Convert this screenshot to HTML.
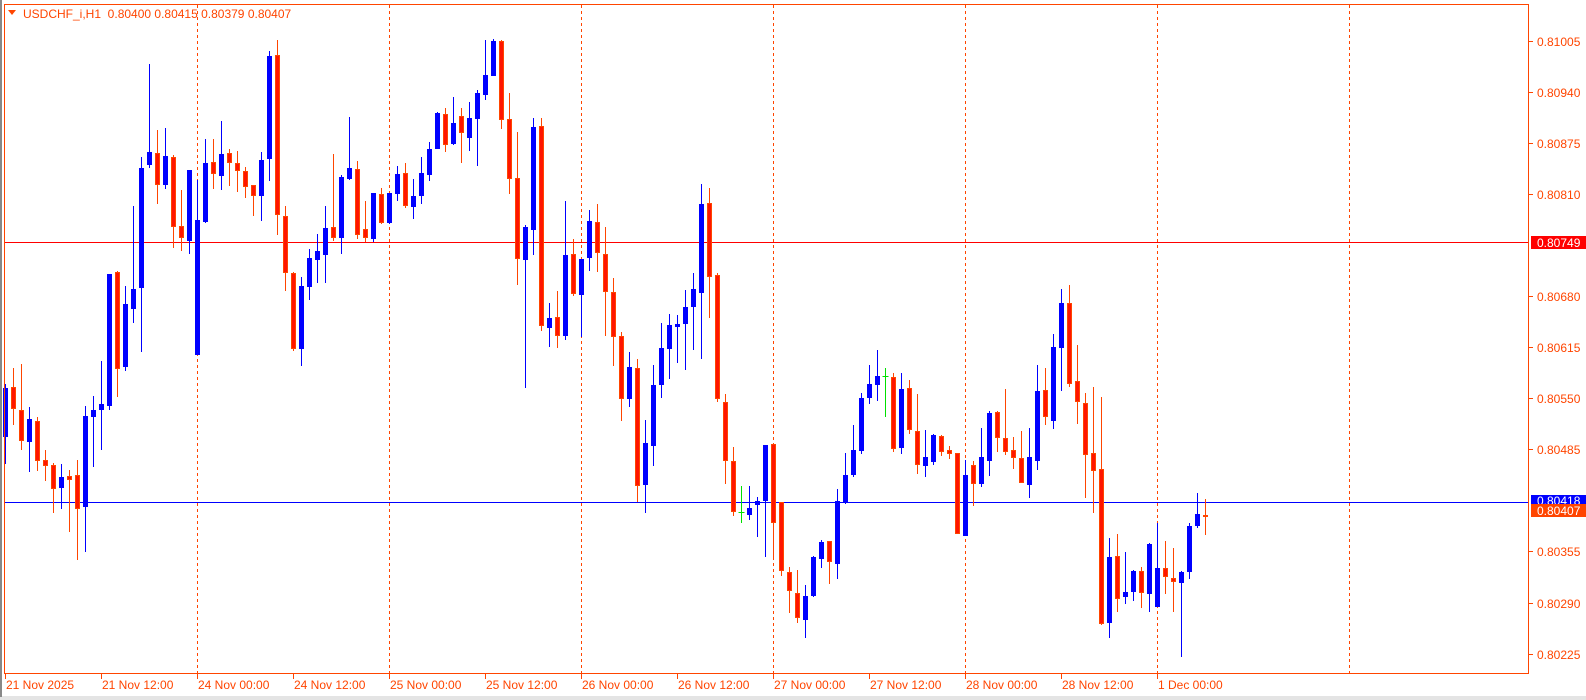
<!DOCTYPE html>
<html><head><meta charset="utf-8"><style>
html,body{margin:0;padding:0;background:#fff;width:1586px;height:700px;overflow:hidden}
svg{display:block}
text{font-family:"Liberation Sans",sans-serif;font-size:12px;fill:#ff4500}
</style></head><body>
<svg id="s" width="1586" height="700" xmlns="http://www.w3.org/2000/svg">
<rect x="0" y="0" width="1586" height="700" fill="#fff"/>
<rect x="0" y="696" width="1586" height="4" fill="#e4e4e4"/>
<rect x="0" y="0" width="2" height="697" fill="#888"/>
<g id="grid"></g>
<line x1="4.5" y1="242.5" x2="1529" y2="242.5" stroke="#ff0000" stroke-width="1"/>
<line x1="4.5" y1="502.5" x2="1529" y2="502.5" stroke="#0000ff" stroke-width="1"/>
<g id="c"></g>
<rect x="4.5" y="4.5" width="1524" height="669" fill="none" stroke="#ff4500" stroke-width="1"/>
<polygon points="8,10 16,10 12,15" fill="#ff4500"/>
<text x="23" y="18" style="font-size:12px;white-space:pre" xml:space="preserve">USDCHF_i,H1  0.80400 0.80415 0.80379 0.80407</text>
<g id="ax"></g>
<rect x="1531" y="236" width="55" height="13" fill="#ff0000"/>
<text x="1537" y="247" style="fill:#fff">0.80749</text>
<rect x="1531" y="495" width="55" height="11" fill="#0000ff"/>
<text x="1537" y="505" style="fill:#fff">0.80418</text>
<rect x="1531" y="504" width="55" height="13" fill="#ff4500"/>
<text x="1537" y="515" style="fill:#fff">0.80407</text>
</svg>
<script>
var NS="http://www.w3.org/2000/svg";
function el(p,t,a,txt){var e=document.createElementNS(NS,t);for(var k in a)e.setAttribute(k,a[k]);if(txt)e.textContent=txt;document.getElementById(p).appendChild(e);return e;}
[197,389,581,773,965,1157,1349].forEach(function(x){el("grid","line",{x1:x+.5,y1:5,x2:x+.5,y2:674,stroke:"#ff4500","stroke-dasharray":"3,3","stroke-width":1});});
[["0.81005",41],["0.80940",92],["0.80875",143],["0.80810",194],["0.80680",296],["0.80615",347],["0.80550",398],["0.80485",449],["0.80355",551],["0.80290",603],["0.80225",654]].forEach(function(p){
el("ax","line",{x1:1529,y1:p[1]+.5,x2:1533,y2:p[1]+.5,stroke:"#ff4500"});
el("ax","text",{x:1537,y:p[1]+5},p[0]);});
var tl=[[5,"21 Nov 2025"],[101,"21 Nov 12:00"],[197,"24 Nov 00:00"],[293,"24 Nov 12:00"],[389,"25 Nov 00:00"],[485,"25 Nov 12:00"],[581,"26 Nov 00:00"],[677,"26 Nov 12:00"],[773,"27 Nov 00:00"],[869,"27 Nov 12:00"],[965,"28 Nov 00:00"],[1061,"28 Nov 12:00"],[1157,"1 Dec 00:00"]];
tl.forEach(function(t){el("ax","line",{x1:t[0]+.5,y1:674,x2:t[0]+.5,y2:679,stroke:"#ff4500"});el("ax","text",{x:t[0]+1,y:689},t[1]);});
var segs=[
 {start:0,y0:30,s:2.907,d:[
 ["b",1042,1183,1028,1262],["r",1038,1102,984,1148],["r",1104,1194,970,1220],["b",1132,1198,1095,1285],["r",1136,1252,1124,1282],
 ["r",1250,1267,1220,1310],["r",1264,1334,1260,1404],["b",1298,1332,1263,1393],["r",1296,1308,1278,1460],["r",1293,1392,1250,1540],
 ["b",1122,1387,1092,1518],["b",1104,1126,1063,1271],["b",1087,1105,962,1222],["b",709,1094,709,1105],["r",704,986,700,1068],
 ["b",797,980,743,992],["b",752,812,512,853],["b",401,751,370,935],["b",355,391,98,400],["r",357,452,290,507],
 ["b",366,452,285,462],["r",370,574,363,635],["r",570,606,465,642],["b",407,612,407,652],["b",552,946,435,946],
 ["b",386,557,317,560],["r",383,420,318,462],["b",360,423,264,465],["r",357,388,345,453],["r",386,411,353,470],
 ["r",409,455,398,488],["r",451,484,451,540],["b",377,484,354,554],["b",75,376,60,440],["r",73,539,28,597],["r",541,705,511,760]]},
 {start:36,y0:30,s:3,d:[
 ["r",730,956,726,962],["b",768,956,741,1007],["b",684,770,657,809],["b",663,689,612,759],["b",594,674,528,759],
 ["r",591,623,372,632],["b",441,623,435,671],["b",414,446,261,449],["r",418,616,393,626],["r",598,623,513,636],
 ["b",489,626,489,636],["r",492,578,474,581],["b",489,578,489,581],["b",432,491,408,512],["r",429,527,399,533],
 ["b",498,530,447,566],["b",429,497,381,521],["b",357,434,336,452],["b",249,356,245,356],["r",252,346,234,365],
 ["b",279,341,201,344],["r",258,310,234,398],["b",264,323,216,362],["b",189,266,180,407],["b",135,194,30,209],
 ["b",33,137,27,137],["r",33,269,30,296],["r",267,446,189,491],["r",444,686,306,764],["b",591,689,585,1073],
 ["b",291,599,264,674],["r",288,889,264,902],["b",864,893,819,950],["r",861,919,783,953],["b",675,917,513,929],
 ["r",672,791,627,797],["b",687,794,687,920]]},
 {start:73,y0:170,s:3,d:[
 ["b",153,263,120,302],["r",156,250,102,305],["r",253,367,171,497],["r",367,502,324,587],["r",499,688,487,752],
 ["b",592,686,546,710],["r",595,949,567,997],["b",820,944,750,1028],["b",646,829,585,887],["b",535,644,459,683],
 ["b",466,536,432,626],["b",462,470,435,578],["b",411,461,359,599],["b",357,410,308,539],["b",102,368,42,566],
 ["r",100,322,54,443],["r",316,688,309,697],["r",697,874,672,941],["r",874,1027,831,1037],["g",1026,1028,948,1058],
 ["b",1015,1034,948,1049],["b",994,1006,981,1100],["b",826,992,826,1160],["r",823,1059,823,1169],["r",995,1204,995,1217],
 ["r",1207,1264,1191,1328],["r",1270,1345,1200,1360],["b",1279,1349,1245,1403],["b",1162,1279,1158,1280],["b",1117,1166,1111,1193],
 ["r",1114,1177,1114,1241],["b",994,1181,957,1226],["b",916,999,849,1001],["b",841,914,765,920],["b",685,842,669,851],
 ["b",643,683,585,701]]},
 {start:109,y0:270,s:3,d:[
 ["b",319,344,240,392],["g",318,320,295,440],["r",322,536,310,545],["b",357,533,309,551],["r",355,479,330,491],
 ["r",484,584,372,611],["b",562,587,480,620],["b",495,575,492,585],["r",498,545,494,557],["r",541,551,528,566],
 ["r",549,793,549,793],["b",616,797,570,797],["r",586,641,573,707],["b",562,641,474,651],["b",429,572,422,617],
 ["r",427,503,422,545],["r",505,545,357,554],["r",541,563,501,597],["r",565,640,483,640],["b",562,644,474,684],
 ["b",363,572,285,599],["r",361,442,293,464],["b",232,452,192,476],["b",99,233,57,362],["r",99,341,45,350],
 ["r",334,397,225,462],["r",400,554,369,683],["r",550,602,351,728],["r",598,1061,381,1064],["b",861,1058,803,1103],
 ["r",858,986,792,1025],["b",966,980,846,1001],["b",903,965,900,992],["r",904,968,891,1013],["b",822,971,819,1025],
 ["b",894,1010,759,1010],["r",895,922,813,971],["r",925,937,834,1025],["b",907,938,904,1160],["b",769,905,759,926],
 ["b",733,767,669,773],["r",736,742,687,794]]}
];
segs.forEach(function(sg){sg.d.forEach(function(c,k){
 var i=sg.start+k, cx=5.5+8*i;
 var Y=function(z){return sg.y0+z/sg.s;};
 var bt=Y(c[1]),bb=Y(c[2]),wt=Y(c[3]),wb=Y(c[4]);
 var col=c[0]=="b"?"#0000ff":(c[0]=="g"?"#00e000":"#ff4500");
 el("c","line",{x1:cx,y1:Math.round(wt),x2:cx,y2:Math.round(wb),stroke:col,"stroke-width":1});
 if(c[0]=="g"){el("c","line",{x1:cx-3,y1:Math.round(bt)+.5,x2:cx+3,y2:Math.round(bt)+.5,stroke:col});return;}
 var h=Math.max(1,Math.round(bb)-Math.round(bt));
 if(c[0]=="b") el("c","rect",{x:cx-2.5,y:Math.round(bt),width:5,height:h,fill:"#0000ff"});
 else el("c","rect",{x:cx-2,y:Math.round(bt)+.5,width:4,height:Math.max(1,h-1),fill:"#ff1500",stroke:"#ff4500","stroke-width":1});
});});
</script>
</body></html>
